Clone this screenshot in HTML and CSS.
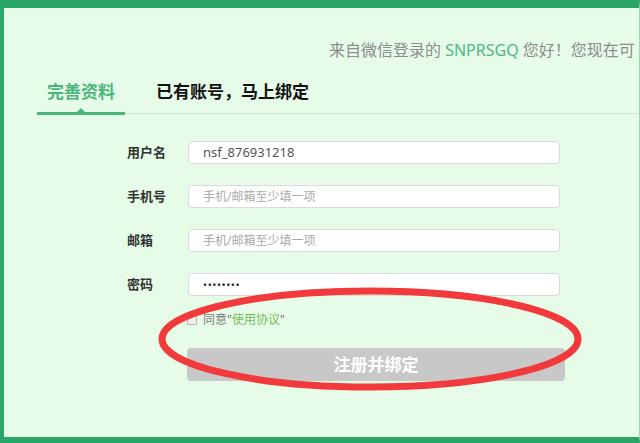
FILE: index.html
```html
<!DOCTYPE html>
<html lang="zh-CN">
<head>
<meta charset="utf-8">
<title>完善资料</title>
<link rel="stylesheet" href="styles.css">
</head>
<body>
<div class="frame">
  <div class="greeting">来自微信登录的 <span class="nick">SNPRSGQ</span> 您好！您现在可</div>
  <div class="tabs">
    <div class="tab active">完善资料<span class="caret"></span></div>
    <div class="tab">已有账号，马上绑定</div>
  </div>
  <form class="form">
    <label class="label">用户名</label>
    <div class="input value">nsf_876931218</div>
    <label class="label">手机号</label>
    <div class="input placeholder">手机/邮箱至少填一项</div>
    <label class="label">邮箱</label>
    <div class="input placeholder">手机/邮箱至少填一项</div>
    <label class="label">密码</label>
    <div class="input password">••••••••</div>
    <div class="agree"><span class="check"></span>同意"<span class="link">使用协议</span>"</div>
  </form>
  <div class="submit">注册并绑定</div>
</div>
<svg class="mark" width="640" height="443" viewBox="0 0 640 443">
  <ellipse cx="370" cy="339" rx="208" ry="48" fill="none" stroke="#f23a3c" stroke-width="7"/>
</svg>
</body>
</html>
```
FILE: styles.css
```css
html, body {
  margin: 0;
  padding: 0;
}
body {
  width: 640px;
  height: 443px;
  overflow: hidden;
  position: relative;
  background: #2aa668;
  font-family: "Noto Sans", "Noto Sans CJK SC", sans-serif;
}
.frame {
  box-sizing: border-box;
  height: 443px;
  margin: 0;
  border-top: 8px solid #2aa668;
  border-left: 4px solid #2aa668;
  border-bottom: 6px solid #2aa668;
  border-right: 1px solid #9fd6b1;
  background: #e6fce9;
  overflow: hidden;
}
.greeting {
  margin-top: 32px;
  padding-left: 325px;
  height: 20px;
  line-height: 20px;
  font-size: 16px;
  color: #8c8c8c;
  white-space: nowrap;
}
.nick {
  color: #4fb585;
}
.tabs {
  display: flex;
  margin-left: 33px;
  border-bottom: 1px solid #d4e5d8;
}
.tab {
  position: relative;
  padding: 20px 10px 8px;
  line-height: 24px;
  font-size: 17px;
  font-weight: 700;
  color: #111;
  margin-left: 21px;
}
.tab.active {
  margin-left: 0;
  color: #48b57a;
  border-bottom: 3px solid #48b57a;
  margin-bottom: -2px;
}
.caret {
  position: absolute;
  left: 50%;
  bottom: 0;
  margin-left: -4px;
  width: 0;
  height: 0;
  border-left: 4px solid transparent;
  border-right: 4px solid transparent;
  border-bottom: 4px solid #48b57a;
}
.form {
  display: grid;
  grid-template-columns: 61px 372px;
  row-gap: 21px;
  margin: 27px 0 0 123px;
}
.label {
  font-size: 13px;
  font-weight: 700;
  color: #333;
  line-height: 23px;
}
.input {
  box-sizing: border-box;
  height: 23px;
  border: 1px solid #dadada;
  border-radius: 4px;
  background: #fff;
  padding-left: 14px;
  line-height: 21px;
  font-size: 12px;
  white-space: nowrap;
}
.value {
  color: #555;
  font-size: 13px;
}
.placeholder {
  color: #aaa;
}
.password {
  color: #333;
  font-size: 11px;
  letter-spacing: 0.5px;
}
.agree {
  grid-column: 2;
  margin-top: -5px;
  height: 16px;
  line-height: 16px;
  font-size: 12px;
  color: #777;
  display: flex;
  align-items: center;
  margin-left: -1px;
}
.check {
  box-sizing: border-box;
  width: 10px;
  height: 10px;
  border: 1px solid #b8b8b8;
  background: #eee;
  border-radius: 1px;
  margin-right: 6px;
}
.link {
  color: #72bd55;
}
.submit {
  margin: 20px 0 0 183px;
  width: 378px;
  height: 33px;
  border-radius: 4px;
  background: #c8c8c8;
  color: #fff;
  font-size: 17px;
  font-weight: 700;
  line-height: 33px;
  text-align: center;
}
.mark {
  position: absolute;
  top: 0;
  left: 0;
}
```
